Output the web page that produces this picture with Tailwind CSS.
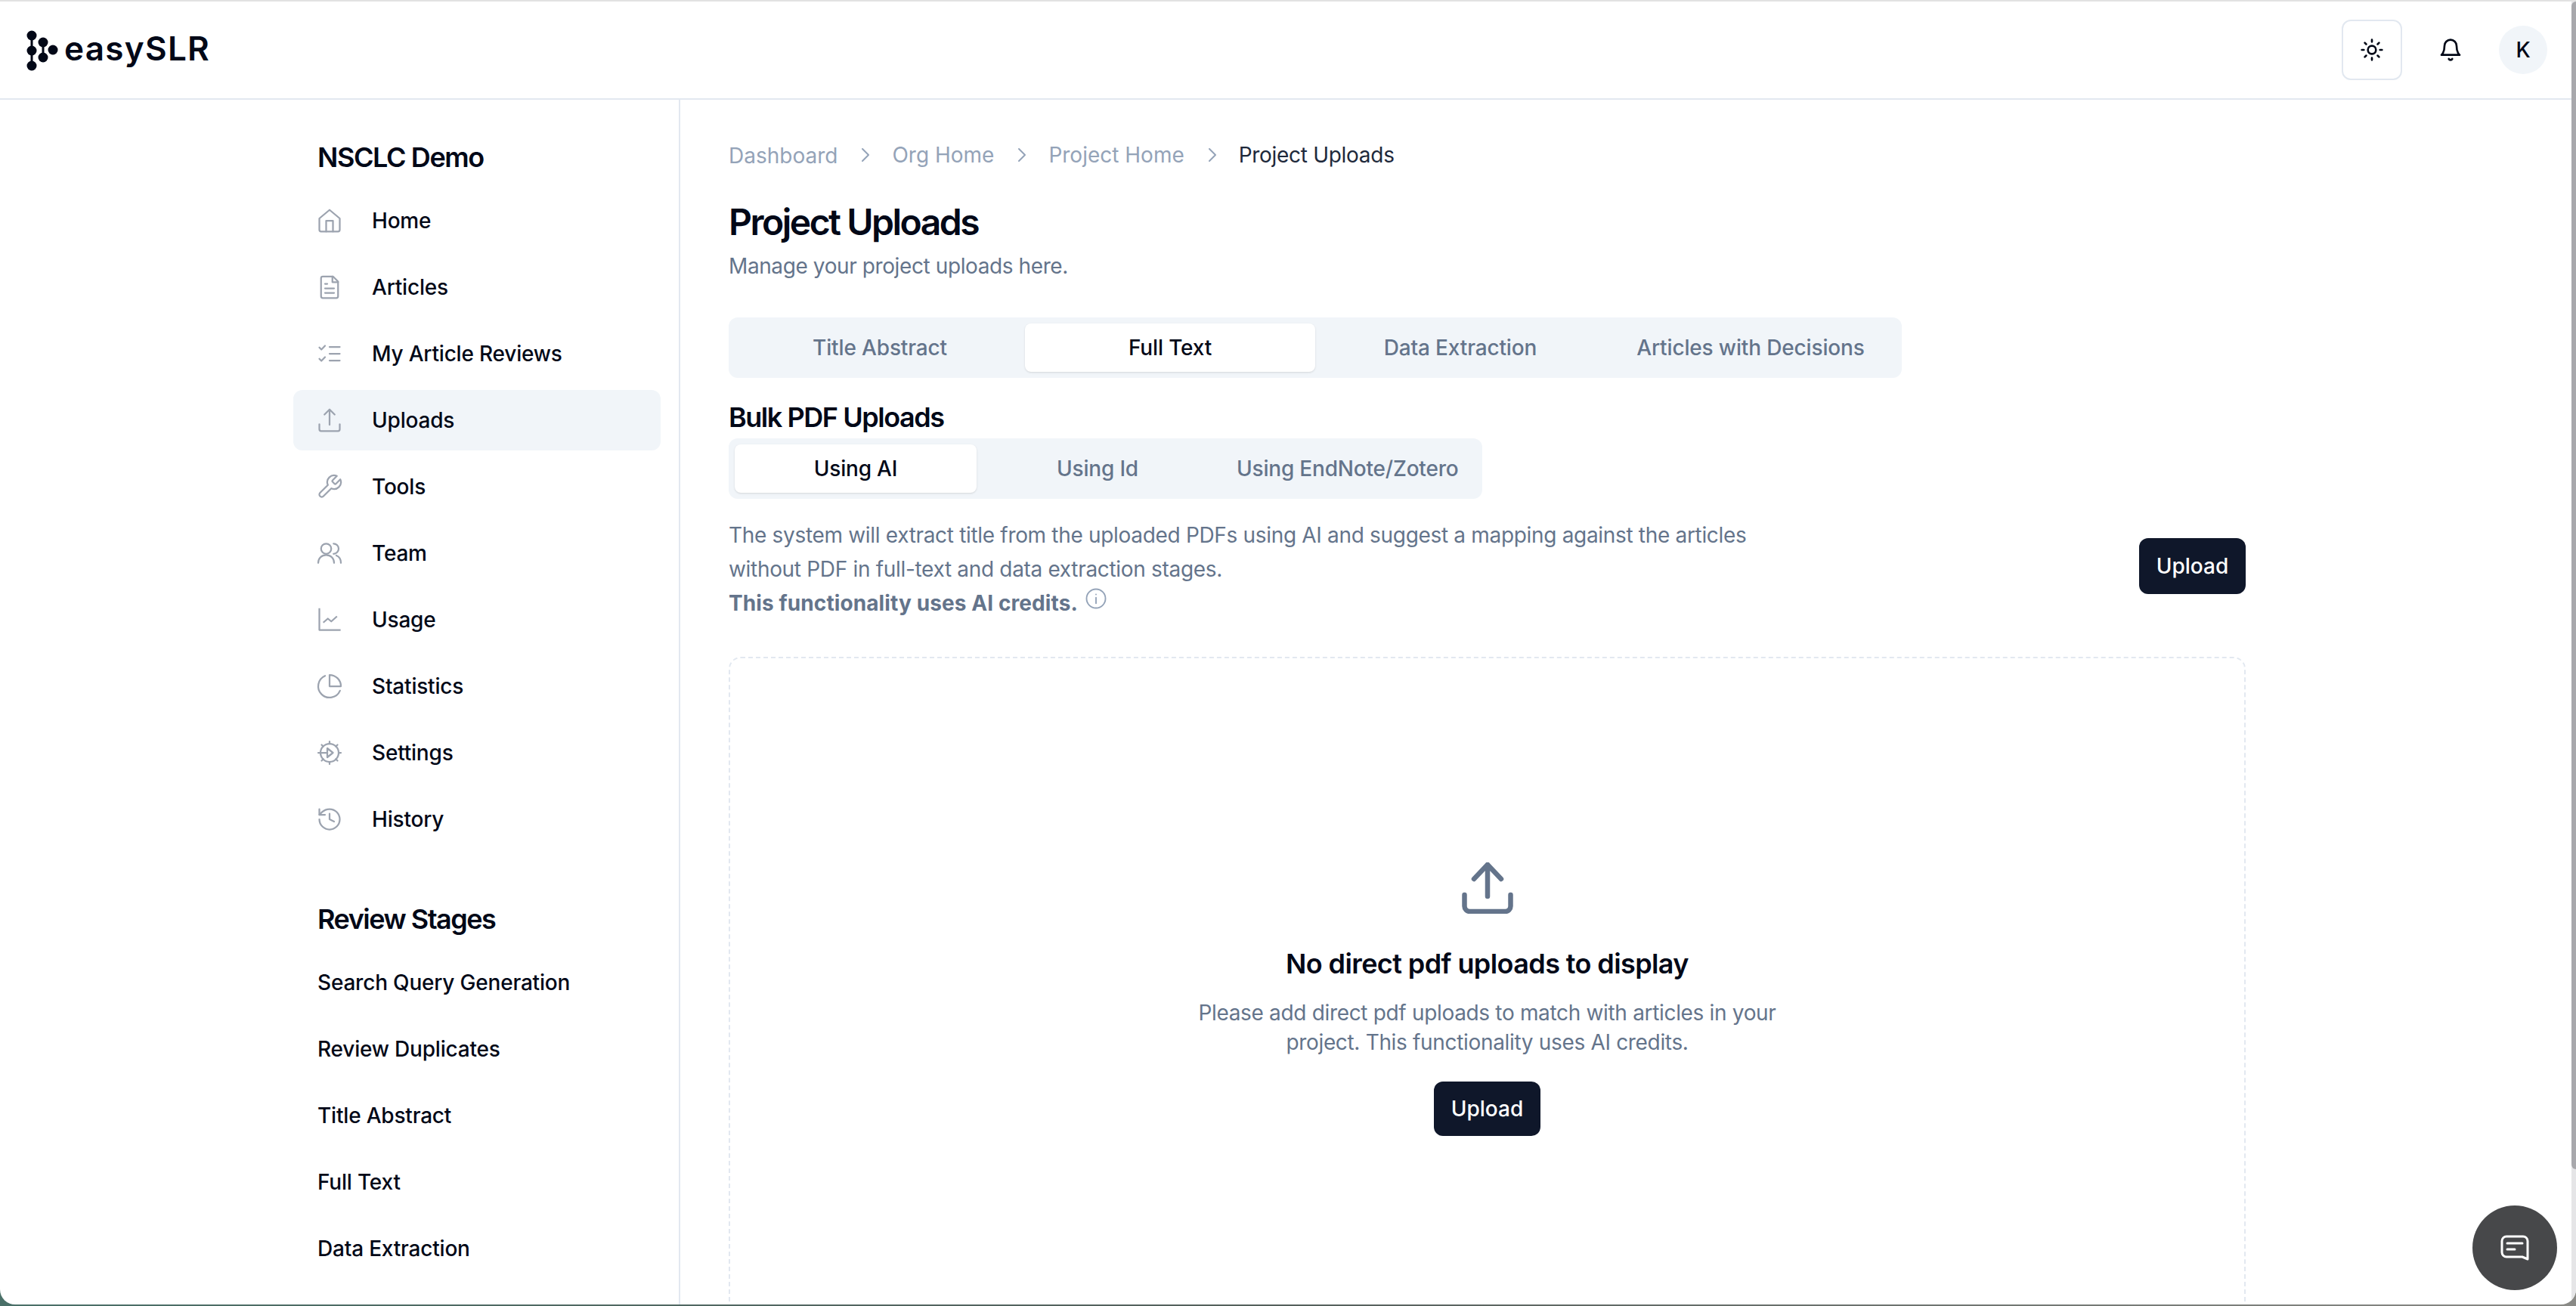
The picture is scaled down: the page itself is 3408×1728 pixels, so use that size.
<!DOCTYPE html>
<html lang="en">
<head>
<meta charset="UTF-8">
<title>easySLR - Project Uploads</title>
<script src="https://cdn.jsdelivr.net/npm/@tailwindcss/browser@4"></script>
</head>
<body class="h-[1728px] overflow-hidden bg-linear-to-r from-[#4a7068] via-[#55605c] to-[#8a8a86] font-['Inter',sans-serif] text-[28px] text-[#020817]">
<div class="relative flex h-[1726px] flex-col overflow-hidden rounded-b-[20px] border-t-2 border-[#e2e2e2] bg-white">

  <!-- top bar -->
  <header class="flex h-[130px] shrink-0 items-center justify-between border-b-2 border-[#e2e8f0] pl-[35px] pr-[38px]">
    <div class="flex items-center gap-[8px]">
      <svg class="mt-[2px]" width="42" height="54" viewBox="0 0 42 54" fill="#020817">
        <circle cx="7" cy="7" r="6.5"/><circle cx="7" cy="27" r="6.5"/><circle cx="7" cy="47" r="6.5"/>
        <circle cx="22" cy="16" r="6.5"/><circle cx="22" cy="36" r="6.5"/><circle cx="35" cy="26" r="6.5"/>
        <path d="M5.500 7h3v40h-3zM20.500 16h3v20h-3z"/>
      </svg>
      <span class="mt-[-4px] text-[44px] leading-none font-semibold tracking-[1.3px]">easySLR</span>
    </div>
    <div class="flex items-center">
      <button class="flex size-[80px] items-center justify-center rounded-xl border-2 border-[#e2e8f0]">
        <svg width="32" height="32" viewBox="0 0 24 24" fill="none" stroke="#020817" stroke-width="2" stroke-linecap="round"><circle cx="12" cy="12" r="4"/><path d="M12 2v2M12 20v2M4.930 4.930l1.410 1.410M17.660 17.660l1.410 1.410M2 12h2M20 12h2M6.340 17.660l-1.410 1.410M19.070 4.930l-1.410 1.410"/></svg>
      </button>
      <svg class="ml-[48px]" width="32" height="32" viewBox="0 0 24 24" fill="none" stroke="#020817" stroke-width="2" stroke-linecap="round" stroke-linejoin="round"><path d="M6 8a6 6 0 0 1 12 0c0 7 3 9 3 9H3s3-2 3-9"/><path d="M10.300 21a1.940 1.940 0 0 0 3.400 0"/></svg>
      <div class="ml-[48px] flex size-[64px] items-center justify-center rounded-full bg-[#f1f5f9] font-medium">K</div>
    </div>
  </header>

  <div class="flex min-h-0 flex-1">
    <!-- sidebar -->
    <aside class="w-[900px] shrink-0 border-r-2 border-[#e2e8f0] pl-[388px] pr-[24px] pt-[48px]">
      <h2 class="pl-[32px] text-[36px] leading-[56px] font-semibold tracking-[-1.4px]">NSCLC Demo</h2>
      <nav class="mt-[16px] flex flex-col gap-[8px] font-medium tracking-[-0.2px]">
        <a class="flex h-[80px] items-center gap-[38px] pl-[30px]"><svg width="36" height="36" viewBox="0 0 24 24" fill="none" stroke="#9ca3af" stroke-width="1.500" stroke-linecap="round" stroke-linejoin="round"><path d="M3 10 12 2.500 21 10v10a1.500 1.500 0 0 1-1.500 1.500h-15A1.500 1.500 0 0 1 3 20z"/><path d="M9 21.500V12h6v9.500"/></svg>Home</a>
        <a class="flex h-[80px] items-center gap-[38px] pl-[30px]"><svg width="36" height="36" viewBox="0 0 24 24" fill="none" stroke="#9ca3af" stroke-width="1.500" stroke-linecap="round" stroke-linejoin="round"><path d="M15 2.500H6A1.500 1.500 0 0 0 4.500 4v16A1.500 1.500 0 0 0 6 21.500h12a1.500 1.500 0 0 0 1.500-1.500V7z"/><path d="M14.500 2.500V7.500h5M8 9h2M8 13h8M8 17h8"/></svg>Articles</a>
        <a class="flex h-[80px] items-center gap-[38px] pl-[30px]"><svg width="36" height="36" viewBox="0 0 24 24" fill="none" stroke="#9ca3af" stroke-width="1.500" stroke-linecap="round" stroke-linejoin="round"><path d="m3 6.500 1.800 1.800L8 5M3 16.500l1.800 1.800L8 15M12 6h9M12 12h9M12 18h9"/></svg>My Article Reviews</a>
        <a class="flex h-[80px] items-center gap-[38px] rounded-xl bg-[#f1f5f9] pl-[30px]"><svg width="36" height="36" viewBox="0 0 24 24" fill="none" stroke="#9ca3af" stroke-width="1.500" stroke-linecap="round" stroke-linejoin="round"><path d="M3 15.500V20a1.500 1.500 0 0 0 1.500 1.500h15A1.500 1.500 0 0 0 21 20v-4.500"/><path d="m7.500 7 4.500-4.500L16.500 7M12 2.500V16"/></svg>Uploads</a>
        <a class="flex h-[80px] items-center gap-[38px] pl-[30px]"><svg width="36" height="36" viewBox="0 0 24 24" fill="none" stroke="#9ca3af" stroke-width="1.500" stroke-linecap="round" stroke-linejoin="round"><path d="M14.700 6.300a1 1 0 0 0 0 1.400l1.600 1.600a1 1 0 0 0 1.400 0l3.770-3.770a6 6 0 0 1-7.940 7.940l-6.910 6.910a2.120 2.120 0 0 1-3-3l6.910-6.910a6 6 0 0 1 7.940-7.940z"/></svg>Tools</a>
        <a class="flex h-[80px] items-center gap-[38px] pl-[30px]"><svg width="36" height="36" viewBox="0 0 24 24" fill="none" stroke="#9ca3af" stroke-width="1.500" stroke-linecap="round" stroke-linejoin="round"><circle cx="9" cy="8" r="4.500"/><path d="M2 20.500c0-4 3-7 7-7s7 3 7 7M15.500 3.500a4.500 4.500 0 0 1 0 9M18 14c2.500 1 4 3.500 4 6.500"/></svg>Team</a>
        <a class="flex h-[80px] items-center gap-[38px] pl-[30px]"><svg width="36" height="36" viewBox="0 0 24 24" fill="none" stroke="#9ca3af" stroke-width="1.500" stroke-linecap="square" stroke-linejoin="round"><path d="M3 2.500V21h18"/><path d="m7 14 3.500-3 3 2.500L18 9.500"/></svg>Usage</a>
        <a class="flex h-[80px] items-center gap-[38px] pl-[30px]"><svg width="36" height="36" viewBox="0 0 24 24" fill="none" stroke="#9ca3af" stroke-width="1.500" stroke-linecap="round" stroke-linejoin="round"><path d="M21.200 15.900A10 10 0 1 1 8 2.800"/><path d="M22 12A10 10 0 0 0 12 2v10z"/></svg>Statistics</a>
        <a class="flex h-[80px] items-center gap-[38px] pl-[30px]"><svg width="36" height="36" viewBox="0 0 24 24" fill="none" stroke="#9ca3af" stroke-width="1.500" stroke-linecap="round" stroke-linejoin="round"><circle cx="12" cy="12" r="8"/><path d="M12 2v2M12 20v2M2 12h2M20 12h2M5 5l1.500 1.500M17.500 17.500 19 19M5 19l1.500-1.500M17.500 6.500 19 5M10 8l5 4-5 4zM4 12h6"/></svg>Settings</a>
        <a class="flex h-[80px] items-center gap-[38px] pl-[30px]"><svg width="36" height="36" viewBox="0 0 24 24" fill="none" stroke="#9ca3af" stroke-width="1.500" stroke-linecap="round" stroke-linejoin="round"><path d="M3 12a9 9 0 1 0 9-9 9.750 9.750 0 0 0-6.740 2.740L3 8"/><path d="M3 3v5h5M12 7v5l4 2"/></svg>History</a>
      </nav>
      <h2 class="mt-[64px] pl-[32px] text-[36px] leading-[56px] font-semibold tracking-[-1.500px]">Review Stages</h2>
      <nav class="mt-[16px] flex flex-col gap-[8px] font-medium tracking-[-0.2px]">
        <a class="flex h-[80px] items-center pl-[32px]">Search Query Generation</a>
        <a class="flex h-[80px] items-center pl-[32px]">Review Duplicates</a>
        <a class="flex h-[80px] items-center pl-[32px]">Title Abstract</a>
        <a class="flex h-[80px] items-center pl-[32px]">Full Text</a>
        <a class="flex h-[80px] items-center pl-[32px]">Data Extraction</a>
      </nav>
    </aside>

    <!-- main -->
    <main class="min-w-0 flex-1 pl-[64px] pt-[51px]">
      <div class="w-[2007px]">
        <nav class="flex h-[44px] items-center text-[#94a3b8]">
          <span class="mt-[2px]">Dashboard</span>
          <svg class="mx-[24px]" width="24" height="24" viewBox="0 0 24 24" fill="none" stroke="#94a3b8" stroke-width="2" stroke-linecap="round" stroke-linejoin="round"><path d="m9 4 8 8-8 8"/></svg>
          <span>Org Home</span>
          <svg class="mx-[24px]" width="24" height="24" viewBox="0 0 24 24" fill="none" stroke="#94a3b8" stroke-width="2" stroke-linecap="round" stroke-linejoin="round"><path d="m9 4 8 8-8 8"/></svg>
          <span>Project Home</span>
          <svg class="mx-[24px]" width="24" height="24" viewBox="0 0 24 24" fill="none" stroke="#94a3b8" stroke-width="2" stroke-linecap="round" stroke-linejoin="round"><path d="m9 4 8 8-8 8"/></svg>
          <span class="tracking-[-0.3px] text-[#1e293b]">Project Uploads</span>
        </nav>
        <h1 class="mt-[35px] text-[48px] leading-[64px] font-semibold tracking-[-2.5px]">Project Uploads</h1>
        <p class="mt-[4px] leading-[44px] tracking-[-0.4px] text-[#64748b]">Manage your project uploads here.</p>

        <div class="mt-[46px] grid h-[80px] w-[1552px] grid-cols-4 rounded-xl bg-[#f1f5f9] p-[8px] font-medium tracking-[-0.15px] text-[#64748b]">
          <div class="flex items-center justify-center">Title Abstract</div>
          <div class="flex items-center justify-center rounded-lg bg-white text-[#020817] shadow-sm">Full Text</div>
          <div class="flex items-center justify-center">Data Extraction</div>
          <div class="flex items-center justify-center">Articles with Decisions</div>
        </div>

        <h2 class="mt-[30px] text-[36px] leading-[44px] font-semibold tracking-[-1.450px]">Bulk PDF Uploads</h2>
        <div class="mt-[6px] inline-flex h-[80px] rounded-xl bg-[#f1f5f9] p-[8px] font-medium tracking-[-0.2px] text-[#64748b]">
          <div class="flex w-[320px] items-center justify-center rounded-lg bg-white text-[#020817] shadow-sm">Using AI</div>
          <div class="flex w-[320px] items-center justify-center">Using Id</div>
          <div class="flex items-center justify-center px-[24px]">Using EndNote/Zotero</div>
        </div>

        <div class="mt-[26px] flex items-center justify-between">
          <div class="w-[1400px] leading-[45px] tracking-[-0.32px] text-[#64748b]">
            <p>The system will extract title from the uploaded PDFs using AI and suggest a mapping against the articles<br>without PDF in full-text and data extraction stages.</p>
            <p class="flex"><span class="font-bold tracking-[0.1px]">This functionality uses AI credits.</span>
              <svg class="ml-[9px] mt-[1px]" width="30" height="30" viewBox="0 0 24 24" fill="none" stroke="#94a3b8" stroke-width="1.500" stroke-linecap="round"><circle cx="12" cy="12" r="10"/><path d="M12 11v6M12 7.500v.1"/></svg>
            </p>
          </div>
          <button class="mb-[10px] flex h-[74px] w-[141px] items-center justify-center rounded-xl bg-[#0f172a] font-medium text-white">Upload</button>
        </div>

        <div class="mt-[48px] flex h-[1000px] flex-col items-center rounded-2xl border-2 border-dashed border-[#e2e8f0] pt-[270px]">
          <svg width="68" height="68" viewBox="0 0 68 68" fill="none" stroke="#64748b" stroke-width="6.500" stroke-linecap="round" stroke-linejoin="round"><path d="M3.500 43v15a7 7 0 0 0 7 7h47a7 7 0 0 0 7-7V43"/><path d="M16 22 34 3l18 19M34 3v42"/></svg>
          <h3 class="mt-[40px] text-[36px] leading-[52px] font-semibold tracking-[-0.6px]">No direct pdf uploads to display</h3>
          <p class="mt-[20px] w-[800px] text-center leading-[39px] tracking-[-0.33px] text-[#64748b]">Please add direct pdf uploads to match with articles in your<br>project. This functionality uses AI credits.</p>
          <button class="mt-[32px] flex h-[72px] w-[141px] items-center justify-center rounded-xl bg-[#0f172a] font-medium text-white">Upload</button>
        </div>
      </div>
    </main>
  </div>

  <!-- chat launcher -->
  <button class="absolute right-[25px] bottom-[19px] flex size-[112px] items-center justify-center rounded-full bg-[#47484a]">
    <svg width="38" height="34" viewBox="0 0 38 34" fill="none" stroke="white" stroke-width="3" stroke-linecap="round" stroke-linejoin="round"><path d="M8 2h22a6 6 0 0 1 6 6v24l-7-3H8a6 6 0 0 1-6-6V8a6 6 0 0 1 6-6z"/><path d="M9 11h20M9 19h10"/></svg>
  </button>
  <!-- scrollbar -->
  <div class="absolute inset-y-0 right-0 w-[6px] bg-[#e5e5e7]">
    <div class="h-[1545px] rounded-l-[6px] bg-[#a8a8ac]"></div>
  </div>
</div>
</body>
</html>
